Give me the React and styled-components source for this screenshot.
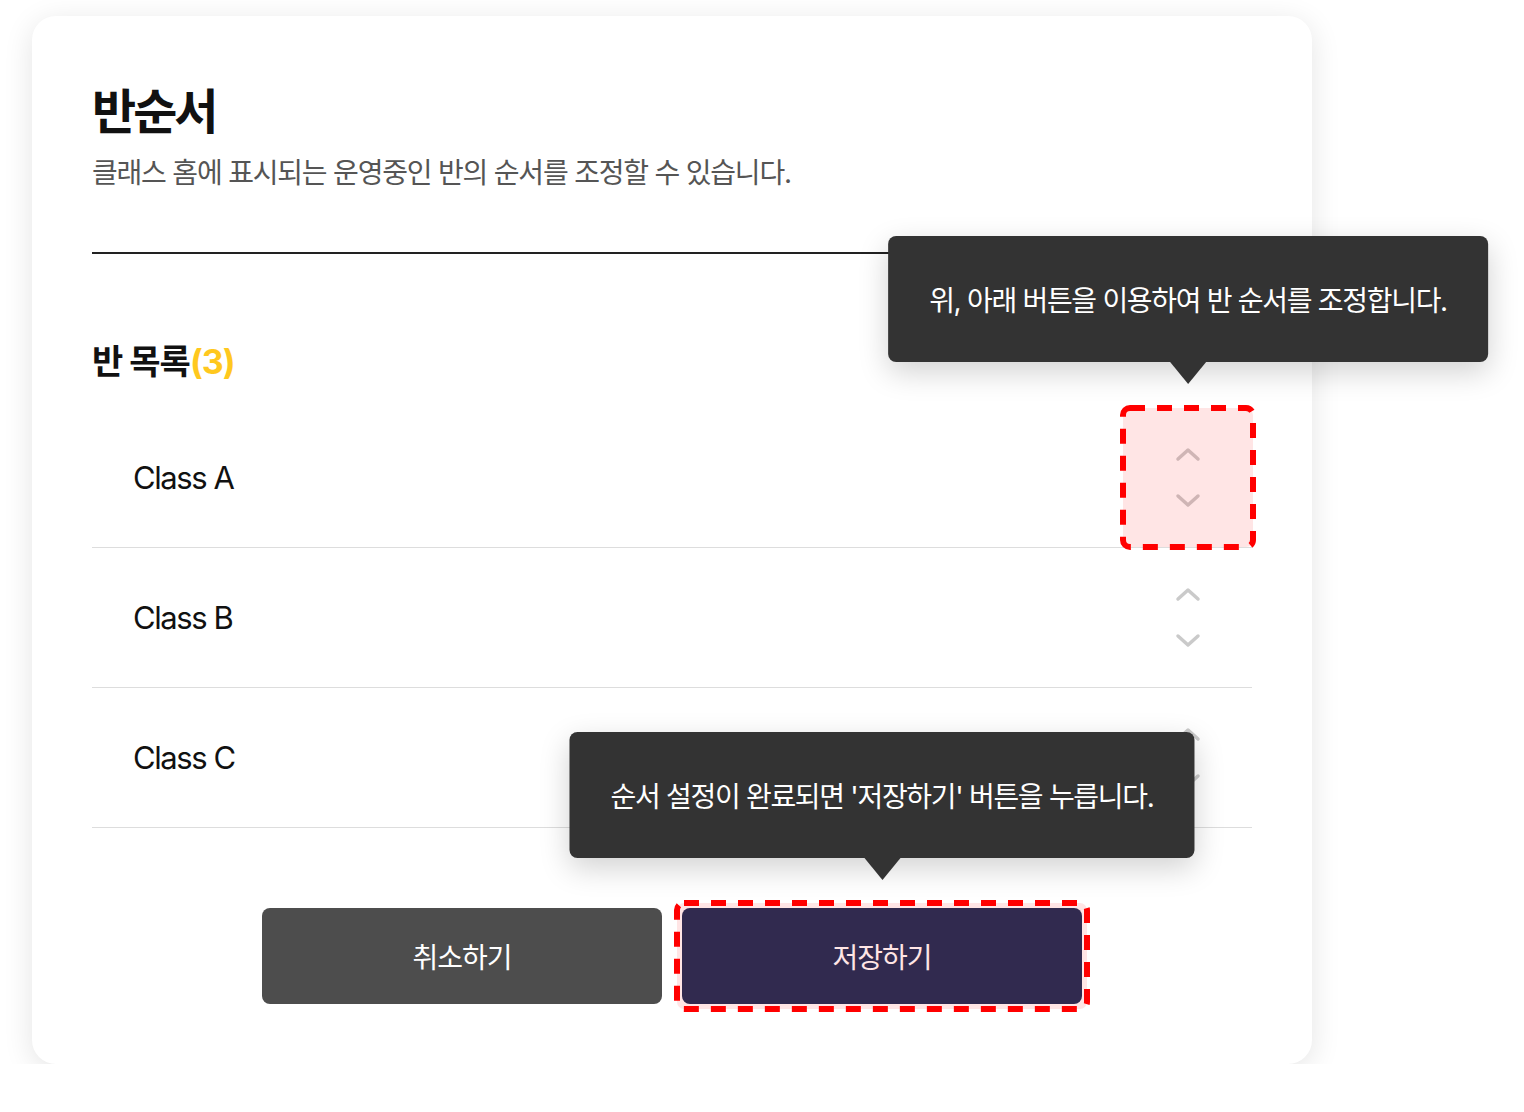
import React from 'react'
import styled, { createGlobalStyle } from 'styled-components'

const GlobalStyle = createGlobalStyle`
    * {
        box-sizing: border-box;
    }
    body {
        margin: 0;
        background: #fff;
        font-family: "Inter", "Noto Sans CJK KR", sans-serif;
        color: #111;
    }
`

const classes = ['Class A', 'Class B', 'Class C']

const ChevronUp = () => (
    <svg width="26" height="15" viewBox="0 0 26 15" fill="none">
        <polyline points="3,12 13,3 23,12" stroke="currentColor" strokeWidth="3.5" strokeLinecap="round" strokeLinejoin="round" />
    </svg>
)

const ChevronDown = () => (
    <svg width="26" height="15" viewBox="0 0 26 15" fill="none">
        <polyline points="3,3 13,12 23,3" stroke="currentColor" strokeWidth="3.5" strokeLinecap="round" strokeLinejoin="round" />
    </svg>
)

// red dashed annotation frame drawn over a highlighted element
const Highlight = ({ inset }) => (
    <Frame inset={inset}>
        <svg width="100%" height="100%">
            <rect x="3" y="3" width="calc(100% - 6px)" height="calc(100% - 6px)" rx="7" ry="7"
                fill="rgba(255, 0, 0, 0.1)" stroke="#ff0000" strokeWidth="6" strokeDasharray="15 12" />
        </svg>
    </Frame>
)

function App() {
    return (
        <Page>
            <GlobalStyle />
            <Card>
                <Title>반순서</Title>
                <Subtitle>클래스 홈에 표시되는 운영중인 반의 순서를 조정할 수 있습니다.</Subtitle>
                <Divider />
                <SectionTitle>반 목록<Count>(3)</Count></SectionTitle>
                <List>
                    {classes.map((name, i) => (
                        <Row key={name}>
                            <ClassName>{name}</ClassName>
                            <OrderControl>
                                {i === 0 && (
                                    <Tooltip offset={46}>위, 아래 버튼을 이용하여 반 순서를 조정합니다.</Tooltip>
                                )}
                                <ArrowButton><ChevronUp /></ArrowButton>
                                <ArrowButton><ChevronDown /></ArrowButton>
                                {i === 0 && <Highlight inset="-3px -4px" />}
                            </OrderControl>
                        </Row>
                    ))}
                </List>
                <Actions>
                    <Button>취소하기</Button>
                    <Button primary>
                        <Tooltip offset={50}>순서 설정이 완료되면 '저장하기' 버튼을 누릅니다.</Tooltip>
                        저장하기
                        <Highlight inset="-8px" />
                    </Button>
                </Actions>
            </Card>
        </Page>
    )
}

const Page = styled.div`
    padding: 16px 0 0 32px;
`

const Card = styled.div`
    width: 1280px;
    height: 1048px;
    padding: 66px 60px 60px;
    background: #fff;
    border-radius: 24px;
    box-shadow: 0 6px 30px rgba(0, 0, 0, 0.11);
    display: flex;
    flex-direction: column;
`

const Title = styled.h1`
    margin: 0;
    font-size: 48px;
    line-height: 60px;
    font-weight: 700;
    color: #111;
    letter-spacing: -3px;
`

const Subtitle = styled.p`
    margin: 13px 0 0;
    font-size: 28px;
    line-height: 36px;
    color: #555;
    letter-spacing: -1.2px;
`

const Divider = styled.div`
    height: 2px;
    background: #222;
    margin-top: 61px;
`

const SectionTitle = styled.h2`
    margin: 86px 0 0;
    font-size: 34px;
    line-height: 44px;
    font-weight: 700;
    color: #111;
    letter-spacing: -1px;
`

const Count = styled.span`
    color: #ffc81e;
`

const List = styled.ul`
    list-style: none;
    margin: 24px 0 0;
    padding: 0;
`

const Row = styled.li`
    height: 140px;
    display: flex;
    align-items: center;
    justify-content: space-between;
    border-bottom: 1px solid #ddd;
    padding-left: 41px;
`

const ClassName = styled.span`
    font-size: 31px;
    color: #111;
    letter-spacing: -1.4px;
`

const OrderControl = styled.div`
    position: relative;
    width: 128px;
    height: 139px;
    display: flex;
    flex-direction: column;
    align-items: center;
    justify-content: center;
    gap: 31px;
`

const Frame = styled.div`
    position: absolute;
    inset: ${({ inset }) => inset};
    pointer-events: none;
    svg {
        display: block;
    }
`

const ArrowButton = styled.button`
    border: none;
    background: none;
    padding: 0;
    color: #cacaca;
    display: flex;
    line-height: 0;
    cursor: pointer;
`

const Tooltip = styled.div`
    position: absolute;
    left: 50%;
    bottom: calc(100% + ${({ offset }) => offset}px);
    transform: translateX(-50%);
    height: 126px;
    padding: 0 41px;
    display: flex;
    align-items: center;
    white-space: nowrap;
    background: #333;
    color: #fff;
    font-size: 28px;
    font-weight: 400;
    letter-spacing: -1.3px;
    border-radius: 8px;
    box-shadow: 0 10px 30px rgba(0, 0, 0, 0.18);
    z-index: 2;
    &::after {
        content: '';
        position: absolute;
        left: 50%;
        top: 100%;
        transform: translateX(-50%);
        border-left: 18px solid transparent;
        border-right: 18px solid transparent;
        border-top: 22px solid #333;
    }
`

const Actions = styled.div`
    margin-top: auto;
    display: flex;
    justify-content: center;
    gap: 20px;
`

const Button = styled.button`
    position: relative;
    width: 400px;
    height: 96px;
    border: none;
    border-radius: 8px;
    background: ${({ primary }) => (primary ? '#1a2f59' : '#4d4d4d')};
    color: #fff;
    font-family: "Inter", "Noto Sans CJK KR", sans-serif;
    font-size: 28px;
    letter-spacing: -1px;
    cursor: pointer;
`

export default App
